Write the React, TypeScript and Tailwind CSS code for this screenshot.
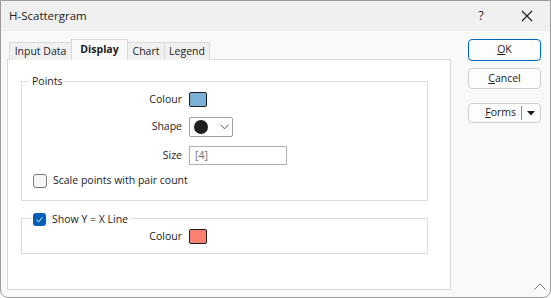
import React from "react";

const font = { fontFamily: '"Open Sans", "Noto Sans", "Liberation Sans", sans-serif' };

function Check({ checked }: { checked?: boolean }) {
  if (checked) {
    return (
      <div className="w-[13px] h-[13px] rounded-[3px] bg-[#005fb8] flex items-center justify-center shrink-0">
        <svg width="9" height="9" viewBox="0 0 9 9">
          <path d="M1.5 4.8 L3.6 6.8 L7.6 2.2" stroke="white" strokeWidth="1" fill="none" />
        </svg>
      </div>
    );
  }
  return <div className="w-[14px] h-[14px] rounded-[3px] border border-[#7a7a7a] bg-[#f5f5f5] shrink-0" />;
}

function Swatch({ color }: { color: string }) {
  return <div className="w-[18px] h-[15px] rounded-[2px] border border-[#1e1e1e]" style={{ background: color }} />;
}

export default function App() {
  return (
    <div className="w-[551px] h-[298px] bg-white text-[10.5px] text-[#1b1b1b] overflow-hidden" style={font}>
      <div className="w-[551px] h-[298px] border border-[#9a9a9a] rounded-b-[8px] bg-[#f9f9f9] flex flex-col overflow-hidden">
        {/* title bar */}
        <div className="h-[30px] bg-[#f0f0f0] flex items-center pl-[8px] shrink-0">
          <span className="flex-1 text-[11.5px]">H-Scattergram</span>
          <span className="w-[46px] text-center text-[12px]">?</span>
          <span className="w-[46px] flex justify-center">
            <svg width="12" height="12" viewBox="0 0 12 12">
              <path d="M1 1 L11 11 M11 1 L1 11" stroke="#1b1b1b" strokeWidth="1.1" />
            </svg>
          </span>
        </div>
        <div className="flex flex-1">
          {/* left: tabs + panel */}
          <div className="ml-[6px] mt-[6px] w-[444px] flex flex-col">
            <div className="flex items-end h-[22px] pl-[2px] relative z-10">
              <div className="w-[63px] h-[18px] border border-[#d9d9d9] border-b-0 bg-[#f0f0f0] flex items-center justify-center -mb-px">Input Data</div>
              <div className="w-[57px] h-[21px] border border-[#d9d9d9] border-b-0 bg-[#f9f9f9] flex items-center justify-center font-bold -ml-px -mb-px">Display</div>
              <div className="w-[38px] h-[18px] border border-[#d9d9d9] border-b-0 bg-[#f0f0f0] flex items-center justify-center -ml-px -mb-px">Chart</div>
              <div className="w-[46px] h-[18px] border border-[#d9d9d9] border-b-0 bg-[#f0f0f0] flex items-center justify-center -ml-px -mb-px">Legend</div>
            </div>
            <div className="h-[231px] border border-[#d9d9d9] bg-white pt-[21px] px-[13px]">
              {/* Points group */}
              <div className="relative border border-[#dcdcdc] h-[120px] w-[407px]">
                <div className="absolute -top-[9px] left-[7px] bg-white px-[3px] leading-[16px]">Points</div>
                <div className="flex flex-col pt-[10px]">
                  <div className="flex items-center h-[15px]">
                    <span className="w-[167px] text-right pr-[7px]">Colour</span>
                    <Swatch color="#7db0d6" />
                  </div>
                  <div className="flex items-center h-[20px] mt-[10px]">
                    <span className="w-[167px] text-right pr-[7px]">Shape</span>
                    <div className="w-[44px] h-[20px] border border-[#a0a0a0] rounded-[2px] flex items-center pl-[4px]">
                      <div className="w-[14px] h-[14px] rounded-full bg-[#1f1f1f]" />
                      <svg className="ml-[12px]" width="9" height="6" viewBox="0 0 9 6">
                        <path d="M0.5 0.8 L4.5 4.8 L8.5 0.8" stroke="#555" strokeWidth="1" fill="none" />
                      </svg>
                    </div>
                  </div>
                  <div className="flex items-center h-[19px] mt-[9px]">
                    <span className="w-[167px] text-right pr-[7px]">Size</span>
                    <div className="w-[98px] h-[19px] border border-[#b0b0b0] flex items-center pl-[5px] text-[#727272]">[4]</div>
                  </div>
                  <div className="flex items-center h-[14px] mt-[9px] pl-[11px] gap-[6px]">
                    <Check />
                    <span>Scale points with pair count</span>
                  </div>
                </div>
              </div>
              {/* Y=X group */}
              <div className="relative border border-[#dcdcdc] h-[36px] w-[407px] mt-[17px]">
                <div className="absolute -top-[8px] left-[9px] bg-white px-[2px] flex items-center gap-[6px] leading-[16px]">
                  <Check checked />
                  <span>Show Y = X Line</span>
                </div>
                <div className="flex items-center h-[15px] mt-[10px]">
                  <span className="w-[167px] text-right pr-[7px]">Colour</span>
                  <Swatch color="#fa8072" />
                </div>
              </div>
            </div>
          </div>
          {/* right buttons */}
          <div className="ml-[17px] mt-[8px] flex flex-col">
            <div className="w-[73px] h-[22px] rounded-[4px] border border-[#0067c0] bg-[#fdfdfd] flex items-center justify-center">
              <span><span className="underline">O</span>K</span>
            </div>
            <div className="w-[73px] h-[21px] rounded-[4px] border border-[#d0d0d0] bg-[#fdfdfd] flex items-center justify-center mt-[7px]">
              <span><span className="underline">C</span>ancel</span>
            </div>
            <div className="w-[73px] h-[20px] rounded-[4px] border border-[#d0d0d0] bg-[#fdfdfd] flex items-center mt-[14px]">
              <span className="flex-1 text-right pr-[5px]"><span className="underline">F</span>orms</span>
              <div className="w-px h-[14px] bg-[#8a8a8a]" />
              <svg className="mx-[5px]" width="8" height="5" viewBox="0 0 8 5">
                <path d="M0 0 L8 0 L4 4.5 Z" fill="#1b1b1b" />
              </svg>
            </div>
          </div>
        </div>
        <div className="h-0 relative">
          <svg className="absolute right-[4px] -top-[14px]" width="12" height="7" viewBox="0 0 12 7">
            <path d="M0.5 6.5 L6 1 L11.5 6.5" stroke="#777" strokeWidth="1" fill="none" />
          </svg>
        </div>
      </div>
    </div>
  );
}
